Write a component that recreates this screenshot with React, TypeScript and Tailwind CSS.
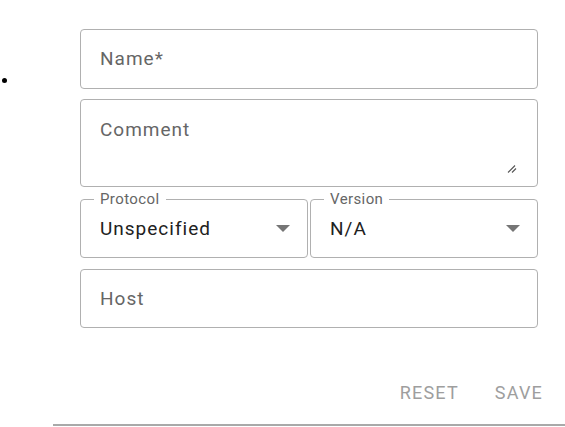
import React from 'react';

function Arrow() {
  return (
    <svg width="14" height="7" viewBox="0 0 14 7" className="shrink-0">
      <path d="M0 0 L14 0 L7 7 Z" fill="#757575" />
    </svg>
  );
}

function SelectBox({ label, value }: { label: string; value: string }) {
  return (
    <div className="relative h-[59px] border border-[#b0b0b0] rounded-[4px] flex items-center justify-between pl-[19px] pr-[17px]">
      <span className="absolute left-[13px] -top-[10px] bg-white px-[6px] text-[15px] leading-[18px] tracking-[0.4px] text-[#666666]">
        {label}
      </span>
      <span className="text-[19px] leading-[24px] tracking-[1px] text-[#212121]">{value}</span>
      <Arrow />
    </div>
  );
}

export default function App() {
  return (
    <div className="w-[565px] h-[427px] bg-white overflow-hidden font-['Roboto',sans-serif]">
      <div className="flex pt-[29px]">
        <div className="w-[80px] shrink-0 pt-[49px] pl-[2px]">
          <div className="w-[5px] h-[5px] rounded-full bg-black" />
        </div>

        <div className="w-[458px] flex flex-col">
          <div className="h-[60px] border border-[#b0b0b0] rounded-[4px] flex items-center pl-[19px]">
            <span className="text-[19px] leading-[24px] tracking-[1px] text-[#666666]">Name*</span>
          </div>

          <div className="relative mt-[10px] h-[88px] border border-[#b0b0b0] rounded-[4px] pl-[19px] pt-[18px]">
            <span className="text-[19px] leading-[24px] tracking-[1px] text-[#666666]">Comment</span>
            <svg width="10" height="8" viewBox="0 0 10 8" className="absolute right-[20px] bottom-[13px]">
              <path d="M1 7.5 L8 0.5 M5 7.5 L9 3.5" stroke="#555555" strokeWidth="1.1" />
            </svg>
          </div>

          <div className="mt-[12px] grid grid-cols-2 gap-[2px]">
            <SelectBox label="Protocol" value="Unspecified" />
            <SelectBox label="Version" value="N/A" />
          </div>

          <div className="mt-[11px] h-[59px] border border-[#b0b0b0] rounded-[4px] flex items-center pl-[19px]">
            <span className="text-[19px] leading-[24px] tracking-[1px] text-[#666666]">Host</span>
          </div>
        </div>
      </div>

      <div className="mt-[56px] flex justify-end gap-[36px] pr-[22px]">
        <button className="text-[18px] leading-[18px] font-normal tracking-[1.2px] text-[#9e9e9e] uppercase">Reset</button>
        <button className="text-[18px] leading-[18px] font-normal tracking-[1.2px] text-[#9e9e9e] uppercase">Save</button>
      </div>

      <div className="mt-[22px] ml-[53px] h-[2px] bg-[#a9a9a9]" />
    </div>
  );
}
